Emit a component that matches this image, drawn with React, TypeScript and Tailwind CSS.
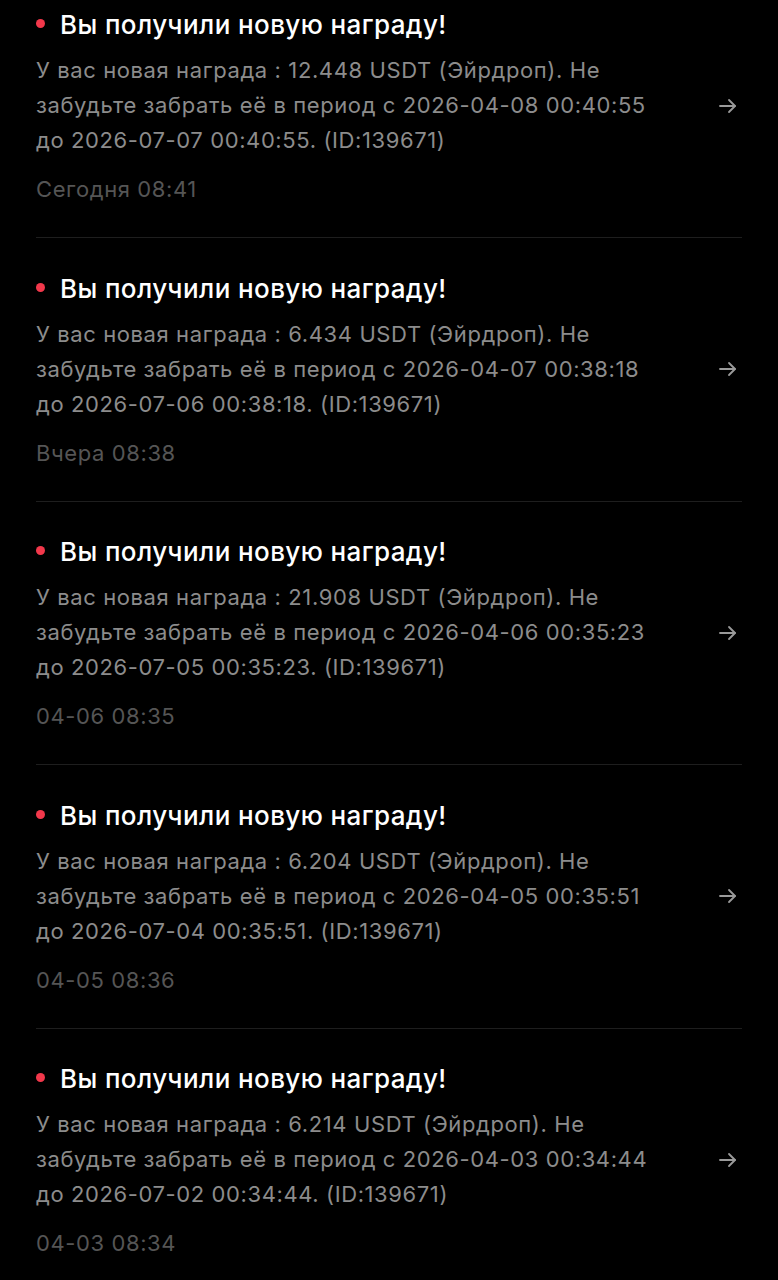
import React from 'react';

interface Reward {
  amount: string;
  from: string;
  to: string;
  when: string;
}

const rewards: Reward[] = [
  { amount: '12.448', from: '2026-04-08 00:40:55', to: '2026-07-07 00:40:55', when: 'Сегодня 08:41' },
  { amount: '6.434', from: '2026-04-07 00:38:18', to: '2026-07-06 00:38:18', when: 'Вчера 08:38' },
  { amount: '21.908', from: '2026-04-06 00:35:23', to: '2026-07-05 00:35:23', when: '04-06 08:35' },
  { amount: '6.204', from: '2026-04-05 00:35:51', to: '2026-07-04 00:35:51', when: '04-05 08:36' },
  { amount: '6.214', from: '2026-04-03 00:34:44', to: '2026-07-02 00:34:44', when: '04-03 08:34' },
];

const ArrowRight: React.FC = () => (
  <svg width="20" height="20" viewBox="0 0 20 20" fill="none" stroke="#9a9a9a" strokeWidth="1.8" strokeLinecap="round" strokeLinejoin="round">
    <path d="M2 10h15" />
    <path d="M11 4l6 6-6 6" />
  </svg>
);

const RewardItem: React.FC<{ item: Reward; last: boolean }> = ({ item, last }) => (
  <div className={`flex items-center ${last ? '' : 'border-b border-[#1e1e1e]'} pb-[33px] pt-[32.5px] first:pt-0`}>
    <div className="flex-1">
      <div className="flex items-center h-[36px]">
        <span className="w-[9px] h-[9px] rounded-full bg-[#f2384b] mr-[15px] mb-[3px]" />
        <span className="text-[26px] leading-[36px] text-white font-medium tracking-[0.4px]">
          Вы получили новую награду!
        </span>
      </div>
      <p className="mt-[10px] max-w-[628px] text-[22px] leading-[35px] text-[#8c8c8c] tracking-[0.6px]">
        У вас новая награда : {item.amount} USDT (Эйрдроп). Не забудьте забрать её в период с {item.from} до {item.to}. (ID:139671)
      </p>
      <div className="mt-[16px] text-[22px] leading-[30px] text-[#555555] tracking-[0.6px]">{item.when}</div>
    </div>
    <div className="pl-[12px] pr-[4px]">
      <ArrowRight />
    </div>
  </div>
);

export default function App() {
  return (
    <div className="min-h-[1280px] bg-black px-[36px] pt-[7px] font-['Inter',sans-serif]">
      {rewards.map((r, i) => (
        <RewardItem key={i} item={r} last={i === rewards.length - 1} />
      ))}
    </div>
  );
}
